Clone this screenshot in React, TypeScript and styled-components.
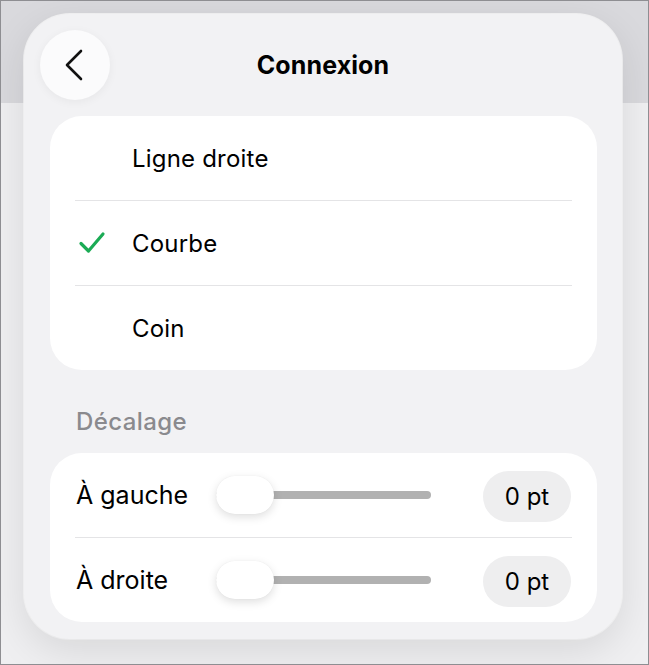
import React from "react";
import styled, { createGlobalStyle } from "styled-components";

const Global = createGlobalStyle`
  html, body { margin: 0; padding: 0; }
  body {
    font-family: Inter, "Noto Sans", "Liberation Sans", sans-serif;
    color: #000;
    -webkit-font-smoothing: antialiased;
  }
`;

const Frame = styled.div`
  width: 649px;
  height: 665px;
  box-sizing: border-box;
  border: 1px solid #8e8e92;
  background: linear-gradient(to bottom, #d9d9dd 0, #d9d9dd 102px, #efeff1 102px, #efeff1 100%);
  padding: 13px 0 0 23px;
  overflow: hidden;
`;

const Panel = styled.div`
  width: 598px;
  height: 625px;
  box-sizing: border-box;
  padding: 16px 16px 17px;
  border-radius: 46px;
  background: #f2f2f4;
  box-shadow: 0 12px 40px rgba(0, 0, 0, 0.1), 0 0 0 1px rgba(255, 255, 255, 0.7);
  display: flex;
  flex-direction: column;
`;

const Header = styled.div`
  display: grid;
  grid-template-columns: 70px 1fr 70px;
  align-items: center;
  height: 70px;
`;

const BackButton = styled.button`
  width: 70px;
  height: 70px;
  border-radius: 50%;
  border: none;
  padding: 0;
  background: #fbfbfc;
  box-shadow: 0 2px 10px rgba(0, 0, 0, 0.05);
  display: flex;
  align-items: center;
  justify-content: center;
  cursor: pointer;
`;

const Title = styled.h1`
  margin: 0;
  text-align: center;
  font-size: 25px;
  font-weight: 700;
  letter-spacing: 0.1px;
`;

const Card = styled.div<{ $top?: number }>`
  margin: ${(p) => p.$top ?? 0}px 9px 0 10px;
  background: #fff;
  border-radius: 32px;
  display: flex;
  flex-direction: column;
`;

const OptionRow = styled.div`
  height: 84px;
  display: flex;
  align-items: center;
  padding-left: 28px;
`;

const CheckSlot = styled.div`
  width: 54px;
  display: flex;
  align-items: center;
`;

const OptionLabel = styled.span`
  font-size: 24px;
  font-weight: 400;
  letter-spacing: 0.2px;
`;

const Divider = styled.div`
  height: 1px;
  margin: 0 25px;
  background: #e4e4e6;
`;

const SectionLabel = styled.div`
  margin: 38px 0 17px 36px;
  font-size: 24px;
  line-height: 28px;
  font-weight: 500;
  letter-spacing: 0.4px;
  color: #8a8a8e;
`;

const SliderRow = styled.div`
  height: 84px;
  display: flex;
  align-items: center;
  padding: 0 26px;
`;

const SliderLabel = styled.span`
  width: 140px;
  font-size: 25px;
  font-weight: 400;
`;

const Track = styled.div`
  position: relative;
  width: 215px;
  height: 8px;
  border-radius: 4px;
  background: #b1b1b1;
`;

const Thumb = styled.div`
  position: absolute;
  left: 0;
  top: 50%;
  width: 58px;
  height: 38px;
  margin-top: -19px;
  border-radius: 19px;
  background: #fff;
  box-shadow: 0 3px 10px rgba(0, 0, 0, 0.13), 0 0 1px rgba(0, 0, 0, 0.08);
`;

const ValuePill = styled.div`
  margin-left: auto;
  width: 88px;
  height: 51px;
  margin-top: 3px;
  border-radius: 26px;
  background: #eeeeef;
  display: flex;
  align-items: center;
  justify-content: center;
  font-size: 24px;
  font-weight: 400;
`;

const Chevron = () => (
  <svg width="22" height="34" viewBox="0 0 22 34" fill="none">
    <path d="M17 3 L3 17 L17 31" stroke="#111" strokeWidth="2.6" strokeLinecap="round" strokeLinejoin="round" />
  </svg>
);

const Check = () => (
  <svg width="28" height="24" viewBox="0 0 28 24" fill="none">
    <path d="M3 12.5 L10.5 20 L25 3" stroke="#1bab55" strokeWidth="3.2" strokeLinecap="round" strokeLinejoin="round" />
  </svg>
);

const options = [
  { label: "Ligne droite", checked: false },
  { label: "Courbe", checked: true },
  { label: "Coin", checked: false },
];

const sliders = ["À gauche", "À droite"];

export default function App() {
  return (
    <>
      <Global />
      <Frame>
        <Panel>
          <Header>
            <BackButton aria-label="Retour">
              <Chevron />
            </BackButton>
            <Title>Connexion</Title>
            <span />
          </Header>
          <Card $top={16}>
            {options.map((o, i) => (
              <React.Fragment key={o.label}>
                {i > 0 && <Divider />}
                <OptionRow>
                  <CheckSlot>{o.checked && <Check />}</CheckSlot>
                  <OptionLabel>{o.label}</OptionLabel>
                </OptionRow>
              </React.Fragment>
            ))}
          </Card>
          <SectionLabel>Décalage</SectionLabel>
          <Card>
            {sliders.map((s, i) => (
              <React.Fragment key={s}>
                {i > 0 && <Divider />}
                <SliderRow>
                  <SliderLabel>{s}</SliderLabel>
                  <Track>
                    <Thumb />
                  </Track>
                  <ValuePill>0 pt</ValuePill>
                </SliderRow>
              </React.Fragment>
            ))}
          </Card>
        </Panel>
      </Frame>
    </>
  );
}
